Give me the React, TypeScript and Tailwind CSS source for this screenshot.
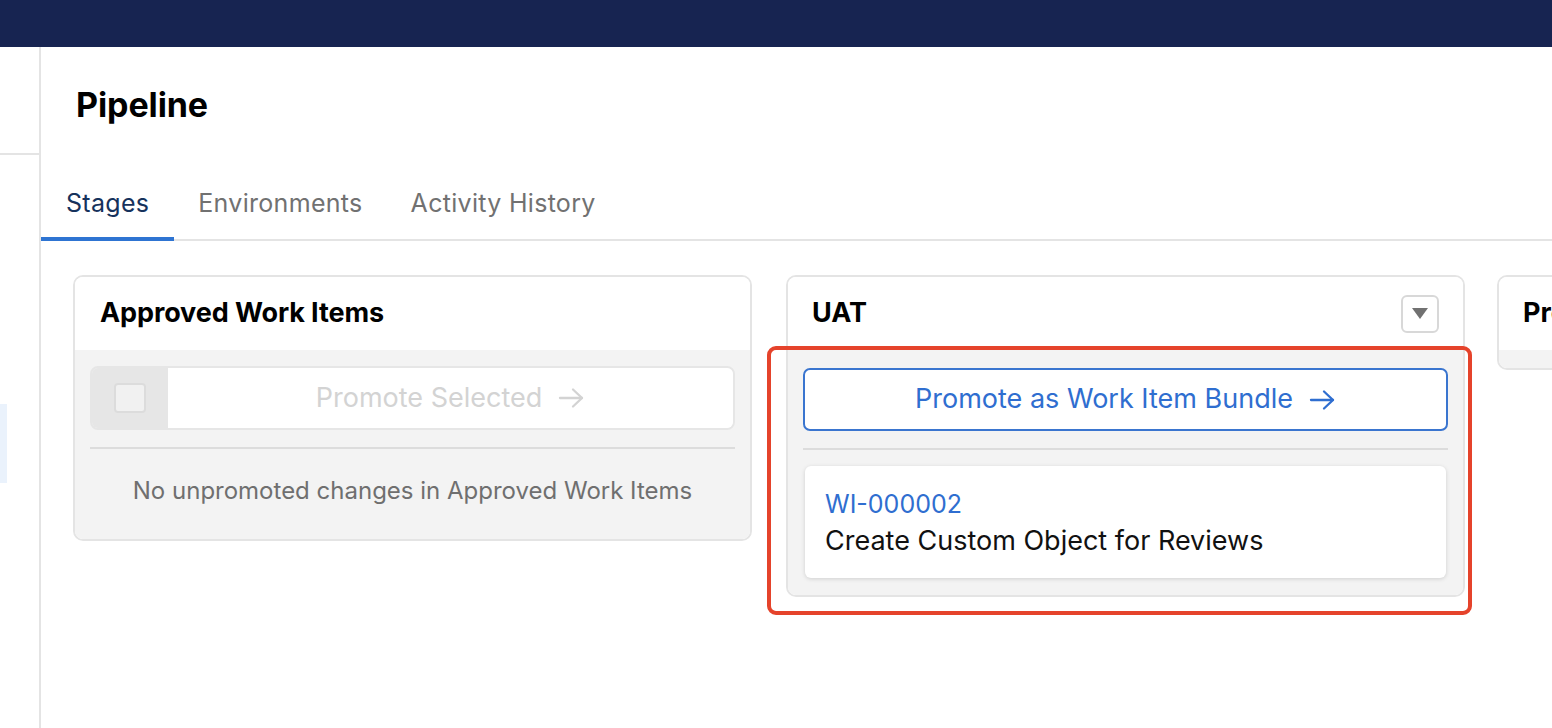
import React from "react";

function Arrow({ className }: { className?: string }) {
  return (
    <svg className={className} width="27" height="22" viewBox="0 0 27 22" fill="none" stroke="currentColor" strokeWidth="2.3" strokeLinecap="round" strokeLinejoin="round">
      <path d="M2 11h22" />
      <path d="M15 2.5l9 8.5-9 8.5" />
    </svg>
  );
}

export default function App() {
  const font = { fontFamily: "Inter, 'Noto Sans', sans-serif" };
  return (
    <div className="flex h-[728px] w-[1552px] flex-col overflow-hidden bg-white text-black" style={font}>
      <div className="h-[47px] shrink-0 bg-[#172451]" />
      <div className="flex min-h-0 flex-1">
        <div className="flex w-[41px] shrink-0 flex-col border-r-2 border-[#e4e4e4]">
          <div className="h-[108px] border-b-2 border-[#e4e4e4]" />
          <div className="mt-[249px] h-[79px] w-[7px] bg-[#eaf2fc]" />
        </div>
        <div className="min-w-0 flex-1 overflow-hidden">
          <div className="pl-[35px] pt-[38px] text-[34px] font-bold leading-[40px] tracking-[-0.1px]">Pipeline</div>
          <div className="mt-[58px] flex h-[58px] border-b-2 border-[#e4e4e4] text-[25px] leading-[24px] tracking-[0.3px]">
            <div className="-mb-[2px] border-b-[4px] border-[#2e74d2] px-[25px] pt-[8px] text-[#16325c]">Stages</div>
            <div className="px-[24px] pt-[8px] text-[#717171]">Environments</div>
            <div className="px-[24px] pt-[8px] text-[#717171]">Activity History</div>
          </div>
          <div className="flex items-start pl-[32px] pt-[34px]">
            {/* Card 1 */}
            <div className="w-[679px] shrink-0 overflow-hidden rounded-[10px] border-2 border-[#e4e4e4]">
              <div className="flex h-[73px] items-center bg-white pl-[25px] text-[27px] font-bold tracking-[-0.1px]">Approved Work Items</div>
              <div className="bg-[#f3f3f3] px-[15px] pb-[33px] pt-[16px]">
                <div className="flex h-[64px] overflow-hidden rounded-[8px] border-2 border-[#e6e6e6]">
                  <div className="flex w-[76px] items-center justify-center bg-[#e6e6e6]">
                    <div className="h-[30px] w-[32px] rounded-[4px] border-2 border-[#dcdcdc] bg-[#f1f1f1]" />
                  </div>
                  <div className="flex flex-1 items-center justify-center gap-[16px] bg-white text-[27px] text-[#d3d3d3]">
                    <span>Promote Selected</span>
                    <Arrow />
                  </div>
                </div>
                <div className="mt-[17px] h-[2px] bg-[#dcdcdc]" />
                <div className="mt-[27px] text-center text-[24px] leading-[30px] text-[#6f6f6f]">No unpromoted changes in Approved Work Items</div>
              </div>
            </div>
            {/* Card 2 */}
            <div className="relative ml-[34px] w-[679px] shrink-0">
              <div className="overflow-hidden rounded-[10px] border-2 border-[#e4e4e4]">
                <div className="flex h-[73px] items-center justify-between bg-white pl-[24px] pr-[24px] text-[27px] font-bold">
                  <span>UAT</span>
                  <div className="flex h-[38px] w-[38px] items-center justify-center rounded-[6px] border-2 border-[#d8d8d8] bg-white">
                    <svg width="16" height="11" viewBox="0 0 16 11"><path d="M0 0h16L8 11z" fill="#717171" /></svg>
                  </div>
                </div>
                <div className="bg-[#f3f3f3] px-[15px] pb-[17px] pt-[18px]">
                  <div className="flex h-[63px] items-center justify-center gap-[16px] rounded-[7px] border-2 border-[#3a75cf] bg-white text-[27px] text-[#2f6ed0]">
                    <span>Promote as Work Item Bundle</span>
                    <Arrow />
                  </div>
                  <div className="mt-[17px] h-[2px] bg-[#dcdcdc]" />
                  <div className="mx-[2px] mt-[16px] h-[112px] rounded-[6px] bg-white pl-[20px] pt-[20px] shadow-[0_1px_4px_rgba(0,0,0,0.15)]">
                    <div className="text-[25px] leading-[36px] text-[#2f6ed0]">WI-000002</div>
                    <div className="text-[27px] leading-[38px] text-[#111]">Create Custom Object for Reviews</div>
                  </div>
                </div>
              </div>
              <div className="pointer-events-none absolute -left-[19px] -right-[7px] top-[71px] -bottom-[18px] rounded-[9px] border-[4px] border-[#e5432b]" />
            </div>
            {/* Card 3 */}
            <div className="ml-[32px] w-[678px] shrink-0 overflow-hidden rounded-[10px] border-2 border-[#e4e4e4]">
              <div className="flex h-[73px] items-center bg-white pl-[24px] text-[27px] font-bold">Production</div>
              <div className="h-[18px] bg-[#f3f3f3]" />
            </div>
          </div>
        </div>
      </div>
    </div>
  );
}
